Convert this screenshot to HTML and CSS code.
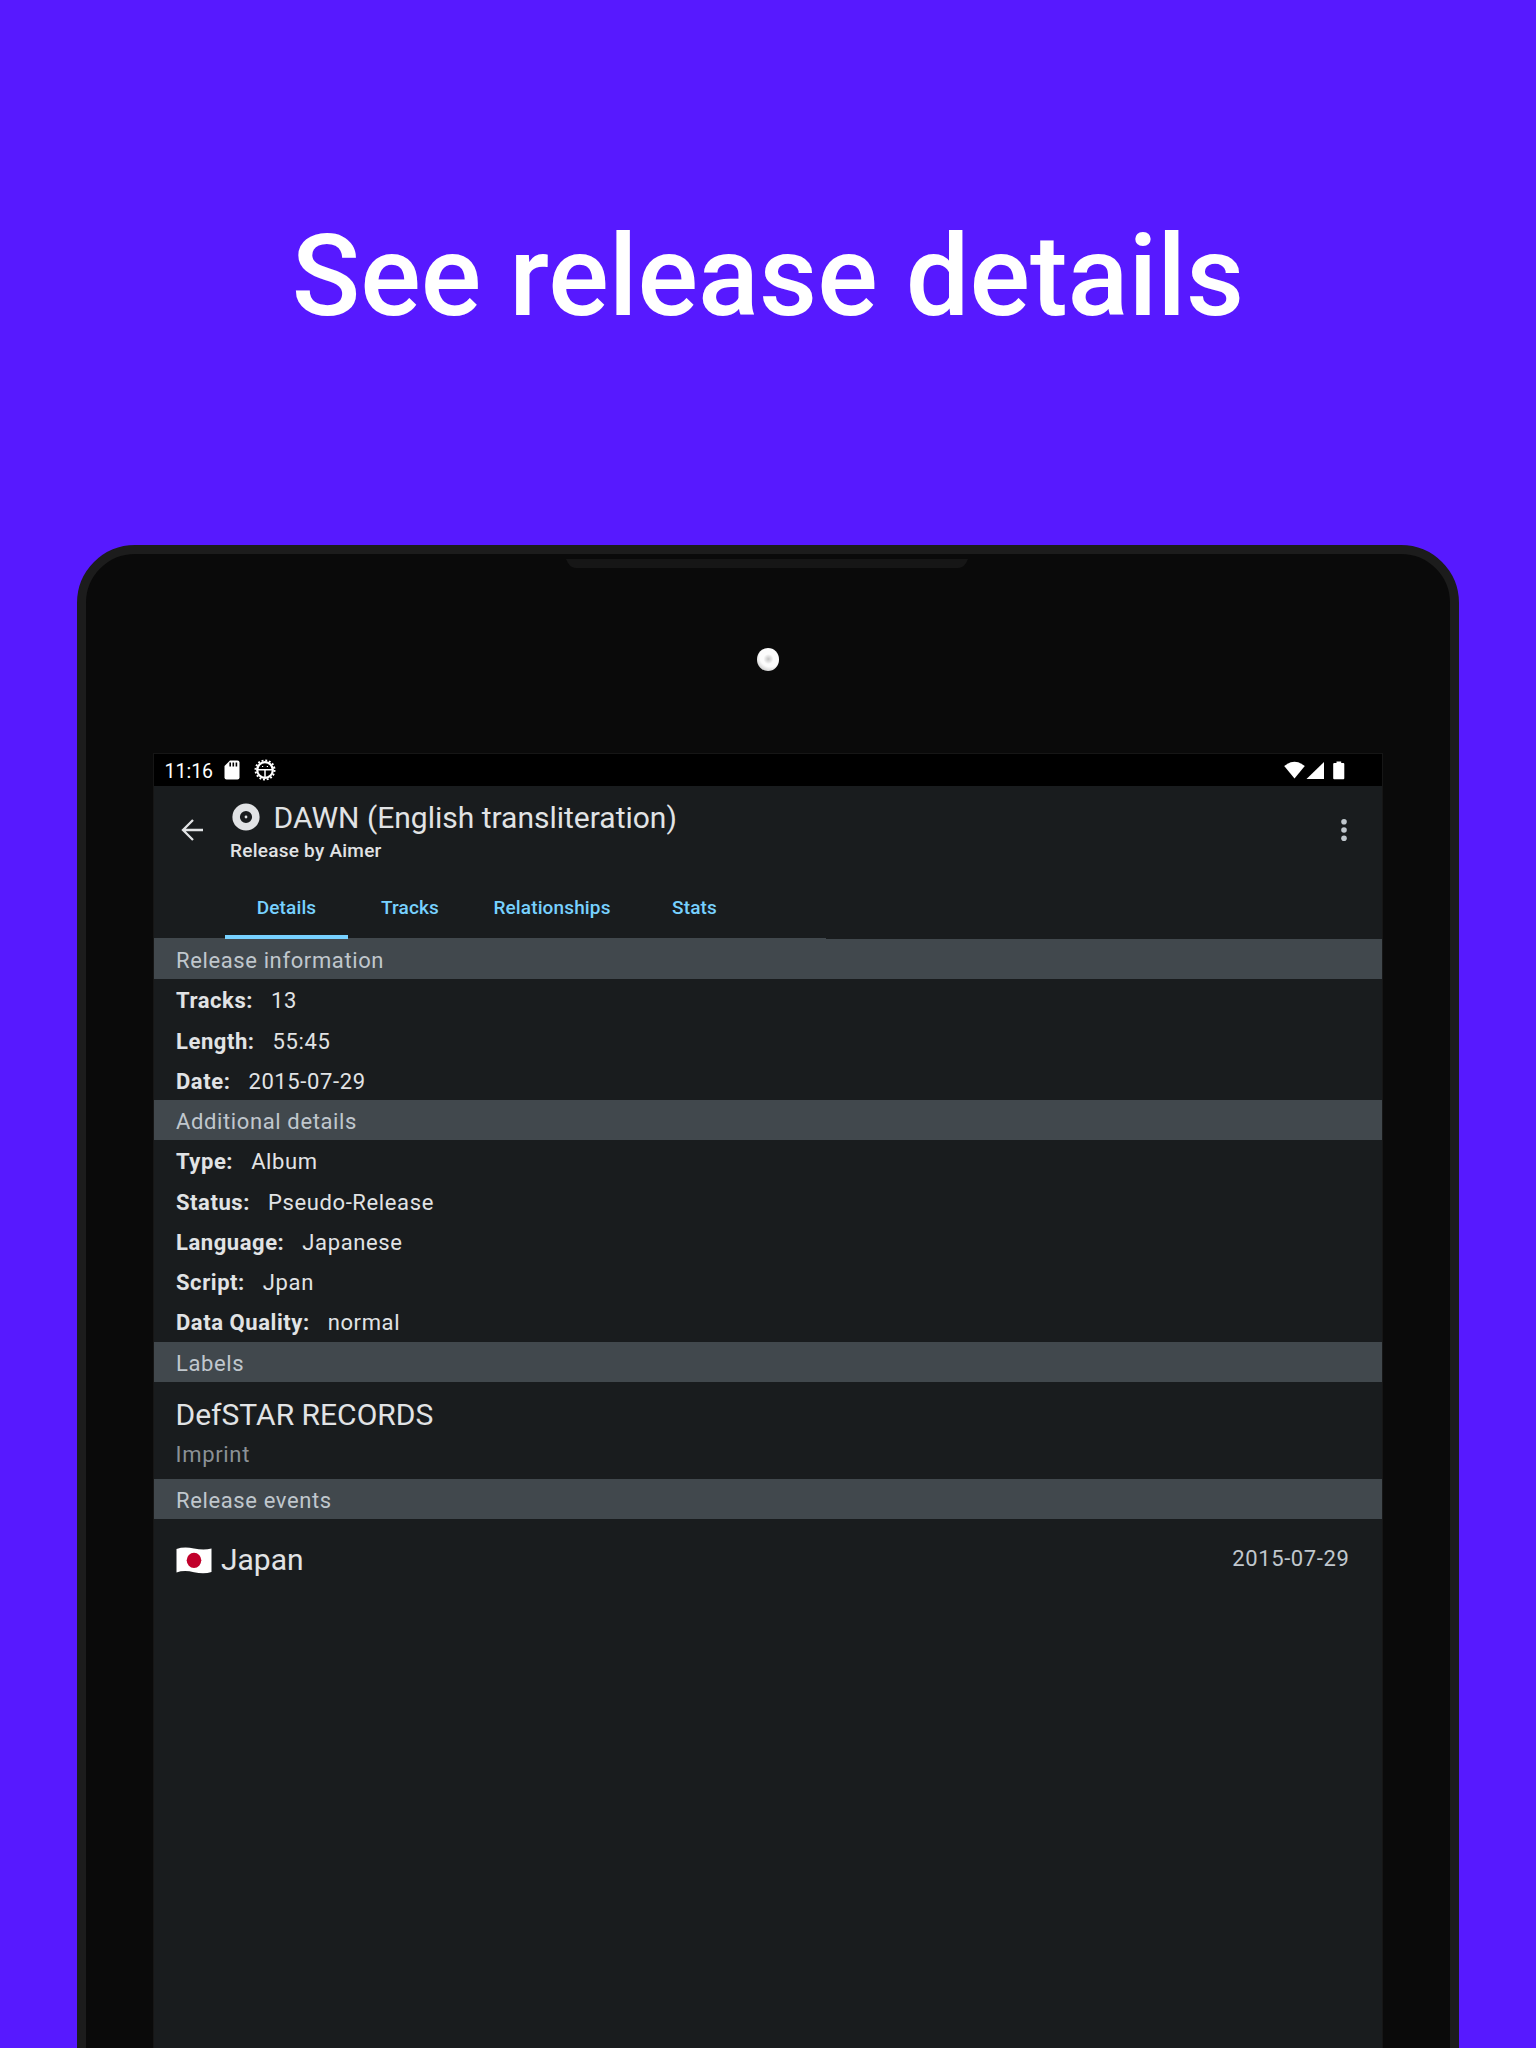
FILE: index.html
```html
<!DOCTYPE html>
<html lang="en">
<head>
<meta charset="utf-8">
<title>See release details</title>
<link rel="stylesheet" href="styles.css">
</head>
<body>
<main class="promo">
  <h1 class="headline"><span>See release details</span></h1>
  <div class="tablet">
    <div class="bezel">
      <svg class="speaker" width="402" height="9" viewBox="0 0 402 9"><path d="M0 0H402C400 5 397 9 392 9H10C5 9 2 5 0 0Z" fill="#161616"/></svg>
      <div class="camera"></div>
    </div>
    <div class="screen">
      <div class="status">
        <span class="clock">11:16</span>
        <svg class="sd" width="16" height="20" viewBox="0 0 16 20"><path d="M6 0.5H13.5Q15.5 0.5 15.5 2.5V17.5Q15.5 19.5 13.5 19.5H2.5Q0.5 19.5 0.5 17.5V6Z" fill="#fff"/><path d="M6.2 2.5V6.5M9.3 2.5V6.5M12.4 2.5V6.5" stroke="#000" stroke-width="1.6"/></svg>
        <svg class="gear" width="22" height="22" viewBox="0 0 22 22" fill="none" stroke="#fff"><circle cx="11" cy="11" r="7.8" stroke-width="2.2"/><circle cx="11" cy="11" r="9.5" stroke-width="2" stroke-dasharray="1.900 1.830"/><path d="M4 10.8H18M11 11V18" stroke-width="1.5"/><path d="M8 7.500h1.200M12.800 7.500h1.200" stroke-width="1.2"/></svg>
        <svg class="signals" width="62" height="20" viewBox="0 0 62 20" fill="#fff"><path d="M0.2 5Q10.500 -3.500 20.800 5L10.500 17.500Z"/><path d="M22.500 18H40V1Z"/><path d="M49.200 3Q49.200 2 50.200 2H52.500V0.500H57.200V2H59.300Q60.300 2 60.300 3V17.200Q60.300 18.200 59.300 18.200H50.200Q49.200 18.200 49.200 17.200Z"/></svg>
      </div>
      <header class="appbar">
        <svg class="back" width="22" height="22" viewBox="0 0 22 22" fill="none" stroke="#e1e3e5" stroke-width="2.3"><path d="M22 11H2M12 1L2 11L12 21"/></svg>
        <div class="titles">
          <div class="title"><svg width="28" height="28" viewBox="0 0 28 28"><path fill="#e1e3e5" fill-rule="evenodd" d="M14 .4A13.600 13.600 0 1 0 14 27.600A13.600 13.600 0 1 0 14 .4ZM14 7.900A6.100 6.100 0 1 1 14 20.100A6.100 6.100 0 1 1 14 7.900Z"/><circle cx="14" cy="14" r="1.400" fill="#e1e3e5"/></svg><span>DAWN (English transliteration)</span></div>
          <div class="subtitle">Release by Aimer</div>
        </div>
        <svg class="more" width="6" height="22" viewBox="0 0 6 22" fill="#c0c7cd"><circle cx="3" cy="2.800" r="2.800"/><circle cx="3" cy="11" r="2.800"/><circle cx="3" cy="19.200" r="2.800"/></svg>
      </header>
      <nav class="tabs">
        <span class="tab active">Details</span><span class="tab tracks">Tracks</span><span class="tab relations">Relationships</span><span class="tab stats">Stats</span>
      </nav>
      <section class="first">
        <h2>Release information</h2>
        <p><b>Tracks:</b><span>13</span></p>
        <p><b>Length:</b><span>55:45</span></p>
        <p><b>Date:</b><span>2015-07-29</span></p>
      </section>
      <section>
        <h2>Additional details</h2>
        <p><b>Type:</b><span>Album</span></p>
        <p><b>Status:</b><span>Pseudo-Release</span></p>
        <p><b>Language:</b><span>Japanese</span></p>
        <p><b>Script:</b><span>Jpan</span></p>
        <p><b>Data Quality:</b><span>normal</span></p>
      </section>
      <section>
        <h2>Labels</h2>
        <div class="label"><div class="name">DefSTAR RECORDS</div><div class="kind">Imprint</div></div>
      </section>
      <section>
        <h2>Release events</h2>
        <div class="event">
          <svg width="36" height="27" viewBox="0 0 36 27"><path d="M.5 2Q8 -.5 18 1.500T35.500 1.500V25Q28 27.500 18 25.200T.5 25.500Z" fill="#fff"/><ellipse cx="18" cy="13.300" rx="7.300" ry="7.600" fill="#c1002b"/></svg>
          <span class="name">Japan</span><span class="date">2015-07-29</span>
        </div>
      </section>
    </div>
  </div>
</main>
</body>
</html>
```
FILE: styles.css
```css
* { box-sizing: border-box; }
body { margin: 0; background: #5719ff; font-family: Roboto, sans-serif; color: #e1e3e5; }
.promo { height: 2048px; overflow: hidden; display: flex; flex-direction: column; align-items: center; }
.headline { margin: 0; height: 545px; flex: none; padding-top: 210px; font-size: 113px; line-height: 134px; font-weight: 500; color: #fff; white-space: nowrap; }
.tablet { width: 1382.5px; height: 1700px; flex: none; border: 9px solid #1c1c1c; border-radius: 58px; background: #0a0a0a; display: flex; flex-direction: column; align-items: center; }
.bezel { height: 199px; flex: none; display: flex; flex-direction: column; align-items: center; padding-top: 5px; }
.speaker { display: block; margin-right: 2px; }
.camera { width: 22.500px; height: 23px; margin-top: 79.500px; border-radius: 50%; background: radial-gradient(circle at 52% 48%, #c4c4c4 0, #e4e4e4 3px, transparent 5px), radial-gradient(circle at 62% 34%, #fcfcfc 11px, #cfcfcf 16px); }
.screen { width: 1230px; height: 1400px; flex: none; border: 1px solid #161616; background: #191c1e; }
.status { height: 32px; background: #000; display: flex; align-items: flex-start; padding: 0 36px 0 10.500px; color: #fff; }
.clock { width: 59.500px; font-size: 19.500px; line-height: 35px; }
.sd { margin-top: 6px; }
.gear { margin: 5px 0 0 14px; }
.signals { margin: 7px 0 0 auto; }
.appbar { height: 88px; display: flex; padding-right: 35px; }
.back { margin: 33px 0 0 27px; }
.titles { padding-left: 27px; }
.title { height: 50px; display: flex; align-items: flex-start; padding: 17px 0 0 2px; font-size: 30px; line-height: 30px; white-space: nowrap; }
.title span { margin-left: 13.500px; }
.subtitle { font-size: 19px; line-height: 30px; font-weight: 500; letter-spacing: .25px; }
.more { margin: 33px 0 0 auto; }
.tabs { width: 672px; height: 65px; padding-left: 71px; display: flex; color: #77d1ff; font-size: 19px; line-height: 68px; font-weight: 500; letter-spacing: .14px; border-bottom: 1px solid #41484d; }
.tab { height: 65px; text-align: center; }
.active { width: 123px; border-bottom: 4px solid #77d1ff; }
.tracks { width: 124px; }
.relations { width: 160px; }
.stats { width: 125px; }
h2, p { margin: 0; height: 40.270px; padding-left: 22px; font-size: 22px; line-height: 43.500px; font-weight: 400; letter-spacing: .62px; }
h2 { background: #41484d; color: #c0c7cd; }
p { display: flex; }
p span { margin-left: 18px; }
b { font-weight: 700; letter-spacing: .56px; }
.label { height: 97px; padding: 13px 0 0 21.500px; }
.name { font-size: 30px; line-height: 40px; }
.kind { font-size: 22px; line-height: 40px; letter-spacing: .68px; color: #8b9196; }
.event { display: flex; align-items: center; padding: 20px 32.500px 0 22px; }
.event .name { margin-left: 9px; line-height: 42px; }
.date { margin-left: auto; font-size: 22px; line-height: 26px; padding-bottom: 2px; letter-spacing: .62px; color: #c0c7cd; }
```
